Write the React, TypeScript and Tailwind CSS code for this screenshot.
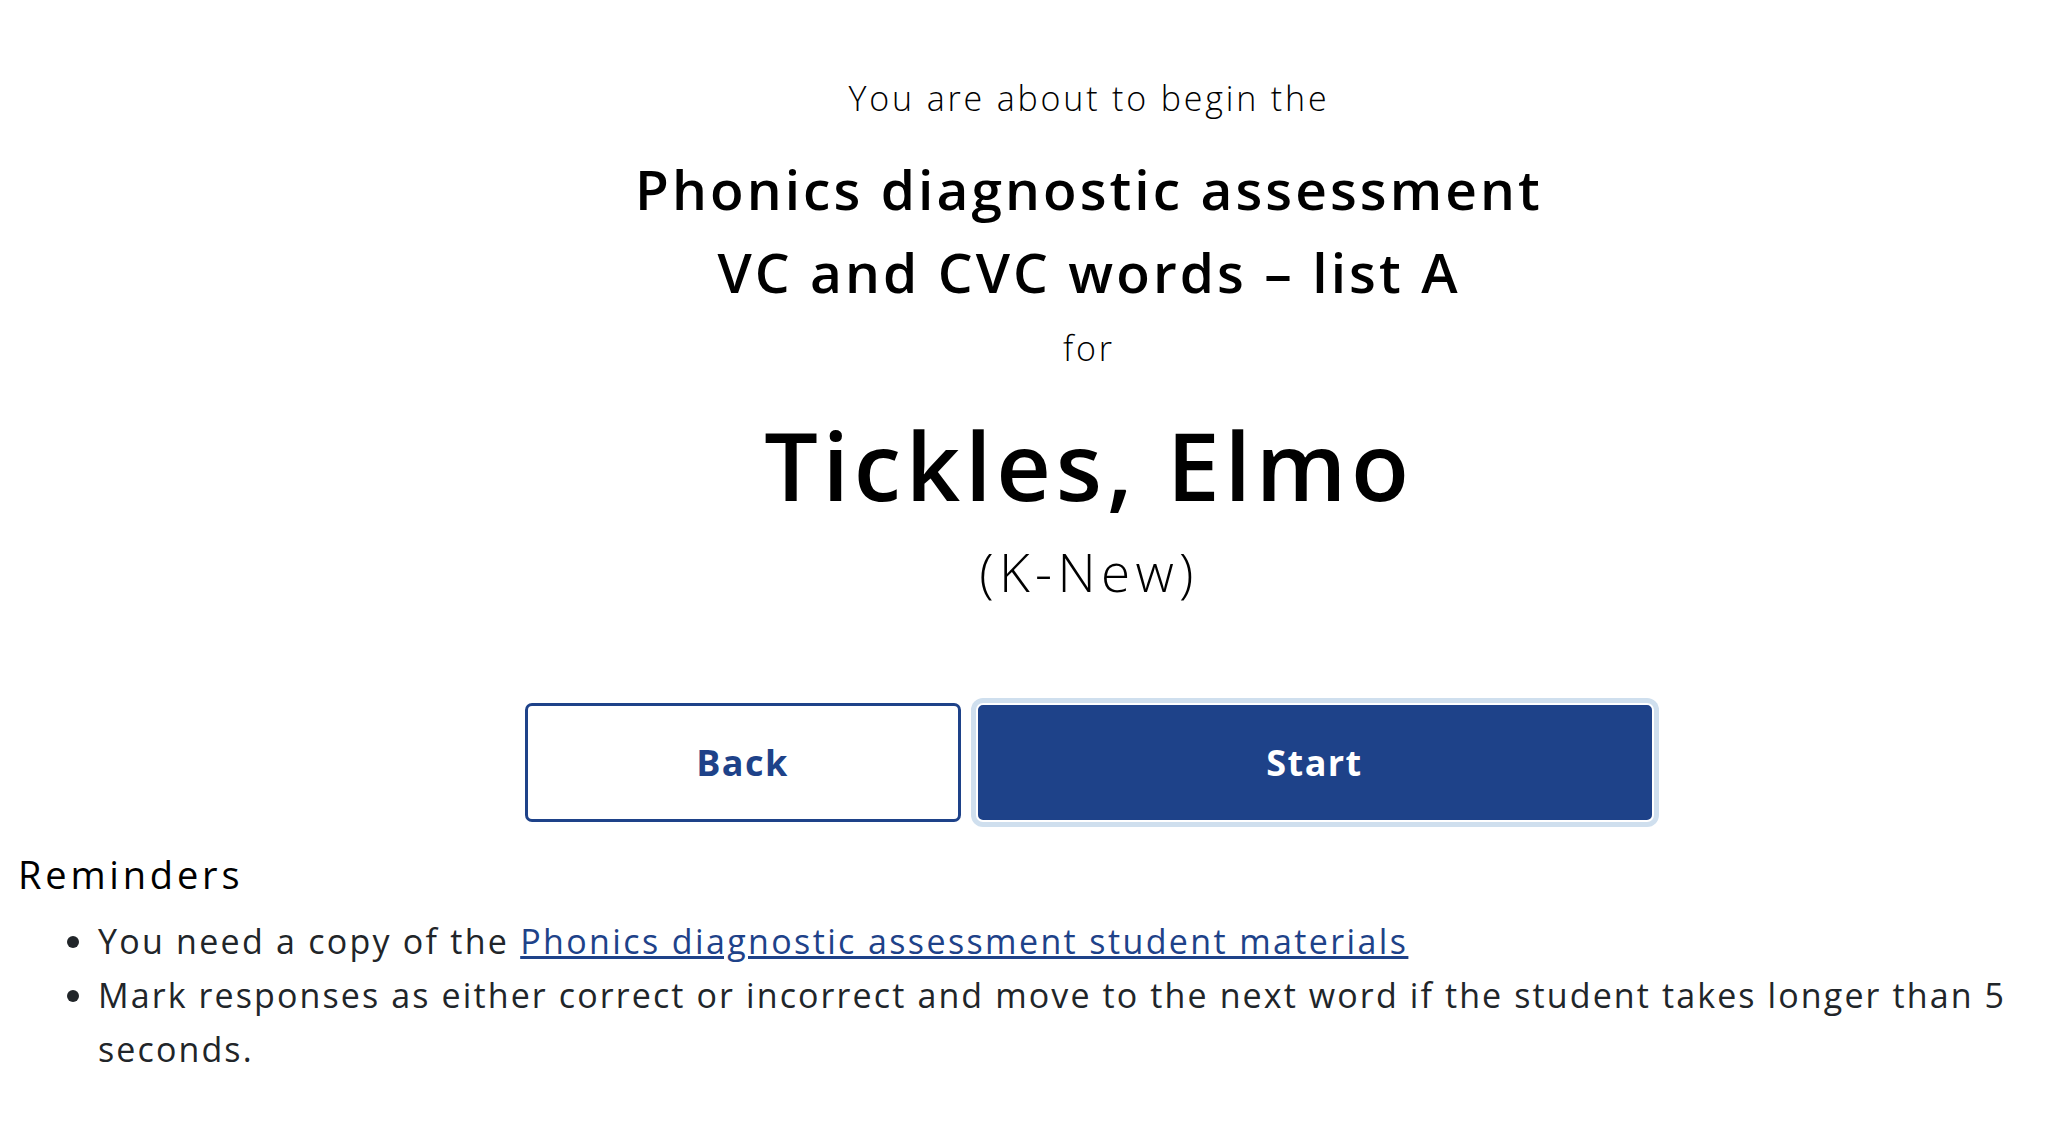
export default function App() {
  return (
    <div className="min-h-screen bg-white font-['Open_Sans',sans-serif] text-black">
      <div className="pl-[117px]">
        {/* Intro */}
        <section className="flex flex-col items-center pt-[73px] text-center">
          <p className="text-[34px] leading-[51px] font-light tracking-[0.083em]">
            You are about to begin the
          </p>
          <h1 className="mt-[23px] text-[55px] leading-[83px] font-semibold tracking-[0.056em]">
            Phonics diagnostic assessment
            <br />
            VC and CVC words – list A
          </h1>
          <p className="mt-[10px] text-[34px] leading-[51px] font-light tracking-[0.083em]">for</p>
          <h2 className="mt-[33px] text-[95px] leading-[114px] font-semibold tracking-[0.05em]">
            Tickles, Elmo
          </h2>
          <p className="mt-[19px] text-[53px] leading-[64px] font-light tracking-[0.1em]">(K-New)</p>
        </section>

        {/* Actions */}
        <div className="mt-[99px] flex justify-center gap-[15px]">
          <button className="flex h-[119px] w-[436px] items-center justify-center rounded-[7px] border-[3px] border-[#1e4289] bg-white text-[36px] font-bold tracking-[0.04em] text-[#1e4289]">
            Back
          </button>
          <button className="flex h-[119px] w-[678px] items-center justify-center rounded-[7px] border-2 border-white bg-[#1e4289] text-[36px] font-bold tracking-[0.04em] text-white shadow-[0_0_0_5px_#cfdfee]">
            Start
          </button>
        </div>
      </div>

      {/* Reminders */}
      <section className="mt-[29px] px-[18px] pb-10 text-[#212529]">
        <h3 className="text-[38px] leading-[46px] font-normal tracking-[0.1em] text-black">Reminders</h3>
        <ul className="mt-[17px] list-disc pl-[80px] text-[34px] leading-[54px]">
          <li className="tracking-[0.066em]">
            You need a copy of the{' '}
            <a href="#" className="tracking-[0.07em] text-[#1e4289] underline">
              Phonics diagnostic assessment student materials
            </a>
          </li>
          <li className="tracking-[0.062em]">
            Mark responses as either correct or incorrect and move to the next word if the student takes longer than 5
            seconds.
          </li>
        </ul>
      </section>
    </div>
  );
}
